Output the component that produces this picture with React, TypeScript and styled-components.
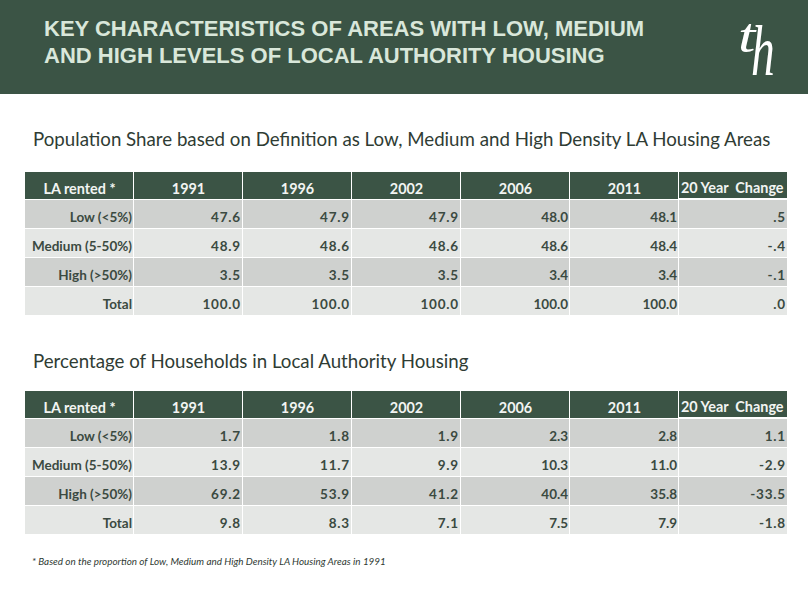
import React from 'react';
import styled, { createGlobalStyle } from 'styled-components';

const GlobalStyle = createGlobalStyle`
  html, body {
    margin: 0;
    padding: 0;
    background: #ffffff;
  }
`;

const YEARS = ['1991', '1996', '2002', '2006', '2011'];

interface TableData {
  label: string;
  values: string[];
}

const populationShare: TableData[] = [
  { label: 'Low (<5%)', values: ['47.6', '47.9', '47.9', '48.0', '48.1', '.5'] },
  { label: 'Medium (5-50%)', values: ['48.9', '48.6', '48.6', '48.6', '48.4', '-.4'] },
  { label: 'High (>50%)', values: ['3.5', '3.5', '3.5', '3.4', '3.4', '-.1'] },
  { label: 'Total', values: ['100.0', '100.0', '100.0', '100.0', '100.0', '.0'] }
];

const householdShare: TableData[] = [
  { label: 'Low (<5%)', values: ['1.7', '1.8', '1.9', '2.3', '2.8', '1.1'] },
  { label: 'Medium (5-50%)', values: ['13.9', '11.7', '9.9', '10.3', '11.0', '-2.9'] },
  { label: 'High (>50%)', values: ['69.2', '53.9', '41.2', '40.4', '35.8', '-33.5'] },
  { label: 'Total', values: ['9.8', '8.3', '7.1', '7.5', '7.9', '-1.8'] }
];

// columns whose numbers are set a little looser in the original slide
const spacedColumns = [0, 1, 2, 5];

const DataTable: React.FC<{ rows: TableData[] }> = ({ rows }) => (
  <Grid>
    <HeadCell>LA rented *</HeadCell>
    {YEARS.map(year => (
      <HeadCell key={year}>{year}</HeadCell>
    ))}
    <HeadCell align="left">20 Year&nbsp; Change</HeadCell>
    {rows.map((row, rowIndex) => (
      <React.Fragment key={row.label}>
        <BodyCell shade={rowIndex % 2 === 0 ? 'dark' : 'light'}>{row.label}</BodyCell>
        {row.values.map((value, colIndex) => (
          <BodyCell
            key={colIndex}
            shade={rowIndex % 2 === 0 ? 'dark' : 'light'}
            spaced={spacedColumns.includes(colIndex)}
          >
            {value}
          </BodyCell>
        ))}
      </React.Fragment>
    ))}
  </Grid>
);

// "th" monogram, drawn as two italic serif letters
const LogoMark: React.FC = () => (
  <LogoSvg width="50" height="64" viewBox="0 0 50 64" aria-label="th">
    <text x="6" y="32" fontSize="48" transform="translate(6 0) scale(1.3 1) translate(-6 0)">t</text>
    <text x="19" y="55" fontSize="72" transform="translate(19 0) scale(0.66 1) translate(-19 0)">h</text>
  </LogoSvg>
);

const App: React.FC = () => {
  return (
    <>
      <GlobalStyle />
      <Slide>
        <Banner>
          <BannerTitle>
            KEY CHARACTERISTICS OF AREAS WITH LOW, MEDIUM
            <br />
            AND HIGH LEVELS OF LOCAL AUTHORITY HOUSING
          </BannerTitle>
          <LogoMark />
        </Banner>

        <Content>
          <SectionTitle top={34}>
            Population Share based on Definition as Low, Medium and High Density LA Housing Areas
          </SectionTitle>
          <TableWrap top={22}>
            <DataTable rows={populationShare} />
          </TableWrap>

          <SectionTitle top={35}>Percentage of Households in Local Authority Housing</SectionTitle>
          <TableWrap top={19}>
            <DataTable rows={householdShare} />
          </TableWrap>

          <Footnote>* Based on the proportion of Low, Medium and High Density LA Housing Areas in 1991</Footnote>
        </Content>
      </Slide>
    </>
  );
};

// Styled components
const Slide = styled.div`
  width: 808px;
  height: 595px;
  overflow: hidden;
  background: #ffffff;
`;

const Banner = styled.div`
  height: 94px;
  box-sizing: border-box;
  background: #3b5445;
  display: flex;
  justify-content: space-between;
  align-items: flex-start;
  padding: 15px 26px 0 44px;
`;

const BannerTitle = styled.h1`
  margin: 0;
  font-family: 'Liberation Sans', Arial, sans-serif;
  font-weight: 700;
  font-size: 22px;
  line-height: 27px;
  color: #d9e7da;
`;

const LogoSvg = styled.svg`
  display: block;
  margin-top: 5px;
  overflow: visible;
  fill: #ffffff;
  font-family: 'Liberation Serif', 'Times New Roman', serif;
  font-style: italic;
`;

const Content = styled.div`
  padding: 0 20px 0 25px;
  font-family: Lato, 'Open Sans', sans-serif;
`;

const SectionTitle = styled.h2<{ top: number }>`
  margin: ${props => props.top}px 0 0 8px;
  font-size: 18.7px;
  line-height: 22px;
  font-weight: 400;
  color: #2f3c34;
  white-space: nowrap;
`;

const TableWrap = styled.div<{ top: number }>`
  margin-top: ${props => props.top}px;
`;

const Grid = styled.div`
  display: grid;
  grid-template-columns: repeat(7, 108px);
  grid-template-rows: 27px repeat(4, 28px);
  column-gap: 1px;
  row-gap: 1px;
  width: 762px;

  & > div:nth-child(7) {
    margin-bottom: 1px;
  }
`;

const HeadCell = styled.div<{ align?: 'left' | 'center' }>`
  background: #3b5445;
  color: #f2f4f2;
  font-size: 14.4px;
  font-weight: 700;
  display: flex;
  align-items: flex-end;
  justify-content: ${props => (props.align === 'left' ? 'flex-start' : 'center')};
  padding: 0 1px 2px 2px;
  white-space: nowrap;
`;

const BodyCell = styled.div<{ shade: 'dark' | 'light'; spaced?: boolean }>`
  background: ${props => (props.shade === 'dark' ? '#cfd1cf' : '#e5e7e5')};
  color: #3b4a41;
  font-size: 13.5px;
  font-weight: 700;
  display: flex;
  align-items: flex-end;
  justify-content: flex-end;
  padding: 0 1px 3px 0;
  letter-spacing: ${props => (props.spaced ? '0.8px' : '0')};
  white-space: nowrap;
`;

const Footnote = styled.p`
  margin: 22px 0 0 7px;
  font-size: 9.9px;
  line-height: 10px;
  font-style: italic;
  color: #2f3a33;
`;

export default App;
